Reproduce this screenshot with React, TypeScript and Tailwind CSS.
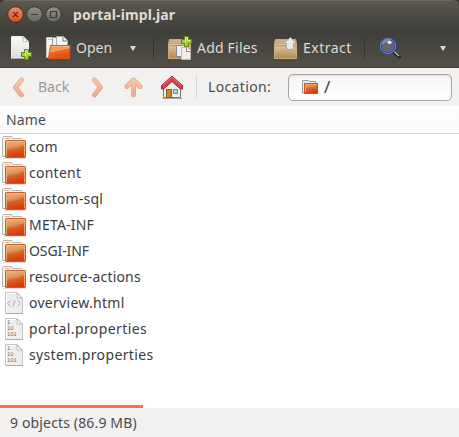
import React from "react";

function FolderIcon() {
  return (
    <svg width="24" height="24" viewBox="0 0 24 24" className="shrink-0">
      <defs>
        <linearGradient id="folderFace" x1="0" y1="0" x2="0.25" y2="1">
          <stop offset="0" stopColor="#e6ab72" />
          <stop offset="0.4" stopColor="#e08a45" />
          <stop offset="0.55" stopColor="#da6628" />
          <stop offset="1" stopColor="#d43c0d" />
        </linearGradient>
      </defs>
      <path d="M.5 21.5V2.5l1-1H9.5l1 2H19.5l1 1V21.5z" fill="#f5f4f2" stroke="#b4b3b0" />
      <path d="M2.5 3.5H8" stroke="#efb98d" />
      <path d="M3.5 5h16" stroke="#fff" />
      <rect x="3.5" y="5.5" width="20" height="17" rx=".6" fill="url(#folderFace)" stroke="#c9602f" />
      <path d="M4.5 21.5V6.5h18v15" fill="none" stroke="#f2bd8b" strokeOpacity=".75" />
      <path d="M5 15Q16 14 22 10V7H5z" fill="#fff" opacity=".13" />
      <path d="M1 23.5h23" stroke="#888" opacity=".25" />
    </svg>
  );
}

function FileIcon({ html }: { html?: boolean }) {
  return (
    <svg width="24" height="24" viewBox="0 0 24 24" className="shrink-0">
      <path d="M3.5 1.5H15L20.5 7v15.5h-17z" fill="#ededec" stroke="#c3c3c2" />
      <path d="M4.5 21.5v-19H14" fill="none" stroke="#fff" />
      <path d="M14.5 1.5c1 2 .5 4 .5 5.5 2 0 4-.2 5.5.5z" fill="#fafafa" stroke="#bcbcbb" />
      <path d="M4 22.5h17" stroke="#aaa" />
      {html ? (
        <path d="m8.5 9.5-3 3 3 3m7-6 3 3-3 3M13 9.5l-2 6" fill="none" stroke="#a9a9a8" />
      ) : (
        <g fill="#686868" fontFamily="DejaVu Sans, sans-serif" fontSize="5.2">
          <text x="5" y="6.5">1</text>
          <text x="5" y="12.5">10</text>
          <text x="5" y="18.5">101</text>
        </g>
      )}
    </svg>
  );
}

function Plus({ x, y }: { x: number; y: number }) {
  return (
    <g transform={`translate(${x} ${y})`}>
      <path d="M3.5.5h4v3h3v4h-3v3h-4v-3h-3v-4h3z" fill="#a9cb3c" stroke="#5b8410" />
      <path d="M4.5 7V1.5h2v3h3" fill="none" stroke="#d8ed86" />
    </g>
  );
}

function NewIcon() {
  return (
    <svg width="24" height="26" viewBox="0 0 24 26" className="shrink-0">
      <defs>
        <linearGradient id="paper" x2="0" y2="1">
          <stop stopColor="#fbfbfa" />
          <stop offset="1" stopColor="#dcdcda" />
        </linearGradient>
      </defs>
      <path d="M1.5 1.5h12l5 5v17h-17z" fill="url(#paper)" stroke="#efefed" />
      <path d="M12.5 1.5c1 2 .5 3.5.5 5 2 0 4-.4 5.5.5z" fill="#fff" stroke="#aaa" strokeWidth=".8" />
      <path d="M1 23.5h18" stroke="#aaa" />
      <Plus x={11} y={14} />
    </svg>
  );
}

function OpenIcon() {
  return (
    <svg width="25" height="26" viewBox="0 0 25 26" className="shrink-0">
      <defs>
        <linearGradient id="openFace" x2=".35" y2="1">
          <stop stopColor="#ed8b38" />
          <stop offset=".48" stopColor="#f3a35b" />
          <stop offset=".52" stopColor="#ef6929" />
          <stop offset="1" stopColor="#e54e13" />
        </linearGradient>
      </defs>
      <path d="M.5 22.5v-20h8l2 3h8l2 3v14z" fill="#f3f2ef" stroke="#c9c5bd" />
      <path d="M2 4.5h5" stroke="#efb583" />
      <path d="M6.5 14V2.5h6l3 3V14z" fill="#f1f1f0" stroke="#999" />
      <path d="M10.5 12.5v-11h7l4 4v8z" fill="#f4f4f3" stroke="#aaa" />
      <path d="M17 2v4h4" fill="#fff" stroke="#777" />
      <path d="M4.5 10.5h19.5l-.5 13H2.5z" fill="url(#openFace)" stroke="#df571d" />
      <path d="M5 11.5h18" stroke="#f7b47a" />
    </svg>
  );
}

function PackageIcon({ extract }: { extract?: boolean }) {
  return (
    <svg width="25" height="26" viewBox="0 0 25 26" className="shrink-0">
      <defs>
        <linearGradient id="box" x2="0" y2="1">
          <stop stopColor="#d4b58a" />
          <stop offset=".35" stopColor="#c19c68" />
          <stop offset=".38" stopColor="#dabe95" />
          <stop offset="1" stopColor="#ad8a58" />
        </linearGradient>
      </defs>
      <path d="M.5 8.5l1-4h20l1 4v15H.5z" fill="url(#box)" stroke="#c9ab7d" />
      <path d="M1 9.5h21" stroke="#e9d3af" opacity=".7" />
      {extract ? (
        <path d="M16.5 2.5l6 6h-3v6h-7v-6h-3z" fill="#e8e8e7" stroke="#aaa" />
      ) : (
        <>
          <path d="M8.5 10.5h7l2 2v9h-9z" fill="#f1f1f0" stroke="#888" />
          <path d="M13.5 12.5h6l3 3v9h-9z" fill="#ededec" stroke="#bbb" />
          <path d="M18.5 12.5v4h4" fill="#fff" stroke="#888" />
          <Plus x={13} y={1} />
        </>
      )}
    </svg>
  );
}

function SearchIcon() {
  return (
    <svg width="24" height="26" viewBox="0 0 24 26" className="shrink-0">
      <path d="m15 17 6.5 5" stroke="#252524" strokeWidth="3" strokeLinecap="round" />
      <path d="m16 16.5 5 4.5" stroke="#bbb" strokeWidth="1.2" />
      <circle cx="10" cy="11" r="7.6" fill="#65666a" stroke="#29449c" strokeWidth="2.2" />
      <circle cx="10" cy="11" r="7.6" fill="none" stroke="#839be6" strokeWidth=".7" />
      <path d="M4.5 9a6 6 0 0 1 8-3.5" stroke="#8f9094" strokeWidth="2" fill="none" />
      <ellipse cx="11.5" cy="7.5" rx="2.2" ry="1.4" fill="#f1f1f1" />
    </svg>
  );
}

function Arrow({ kind }: { kind: "left" | "right" | "up" }) {
  const paths = {
    left: "M9.5 3 3.5 10.5 9.5 18",
    right: "M3.5 3 9.5 10.5 3.5 18",
    up: "M9.5 18V3M3 9.5 9.5 3 16 9.5",
  };
  const width = kind === "up" ? 19 : 13;
  return (
    <svg width={width} height="21" viewBox={`0 0 ${width} 21`} className="shrink-0">
      <defs>
        <linearGradient id={`arrow-${kind}`} gradientUnits="userSpaceOnUse" x1="0" y1="0" x2="0" y2="20">
          <stop stopColor="#eed0ac" />
          <stop offset="1" stopColor="#f1a58e" />
        </linearGradient>
      </defs>
      <path d={paths[kind]} fill="none" stroke="#e6a087" strokeWidth="4.8" strokeLinecap="round" strokeLinejoin="round" />
      <path d={paths[kind]} fill="none" stroke={`url(#arrow-${kind})`} strokeWidth="3.5" strokeLinecap="round" strokeLinejoin="round" />
    </svg>
  );
}

function HomeIcon() {
  return (
    <svg width="24" height="24" viewBox="0 0 24 24" className="shrink-0">
      <path d="M3.5 12 12 5l8.5 7v10.5h-17z" fill="#eeeeed" stroke="#777" />
      <path d="M1.5 14v-3.5L12 1l10.5 9.5V14h-2L12 6.5 3.5 14z" fill="#cf4650" stroke="#a7202c" />
      <path d="M3 10 12 2l8.5 7.5" fill="none" stroke="#e17b80" />
      <path d="M6.5 14.5h5v8h-5z" fill="#c88b17" stroke="#896013" />
      <path d="M13.5 14.5h4v4h-4z" fill="#b8d3d6" stroke="#6d898d" />
      <path d="M2 23.5h20" stroke="#777" opacity=".6" />
    </svg>
  );
}

const files = [
  { name: "com", tracking: "tracking-[0.1px]" },
  { name: "content", tracking: "tracking-[0.25px]" },
  { name: "custom-sql", tracking: "tracking-[0.2px]" },
  { name: "META-INF", tracking: "tracking-[0.2px]" },
  { name: "OSGI-INF", tracking: "tracking-[-0.1px]" },
  { name: "resource-actions", tracking: "tracking-[0.18px]" },
  { name: "overview.html", tracking: "tracking-[0.28px]" },
  { name: "portal.properties", tracking: "tracking-[0.4px]" },
  { name: "system.properties", tracking: "tracking-[0.35px]" },
];

export default function App() {
  return (
    <div className="flex h-[437px] w-[459px] flex-col overflow-hidden bg-[#393833] font-['Noto_Sans',sans-serif] text-[14px] leading-5 text-[#3c3c3c]">
      <header className="flex h-[29px] shrink-0 items-center rounded-t-[6px] border-t border-[#6b6860] bg-linear-to-b from-[#5b5850] to-[#403f3a] pl-[7px]">
        <svg width="56" height="18" viewBox="0 0 56 18">
          <defs>
            <linearGradient id="close" x2="0" y2="1"><stop stopColor="#f58b69" /><stop offset="1" stopColor="#df4b1b" /></linearGradient>
            <linearGradient id="windowButton" x2="0" y2="1"><stop stopColor="#92908a" /><stop offset="1" stopColor="#65645e" /></linearGradient>
          </defs>
          <g stroke="#35342f">
            <circle cx="8.5" cy="8.5" r="7.8" fill="url(#close)" />
            <circle cx="27.5" cy="8.5" r="7.8" fill="url(#windowButton)" />
            <circle cx="46.5" cy="8.5" r="7.8" fill="url(#windowButton)" />
          </g>
          <path d="m6 6 5 5m0-5-5 5M24 8.5h7M43.5 5.5h6v6h-6z" stroke="#3c3b36" strokeWidth="1.2" fill="none" />
        </svg>
        <h1 className="ml-[10px] font-bold tracking-[0.1px] text-[#dfdbd2]">portal-impl.jar</h1>
      </header>
      <div className="flex h-[39px] shrink-0 items-center border-b border-[#3e3d38] bg-linear-to-b from-[#3e3d39] to-[#534f48] pl-[10px] text-[#dfdbd2]">
        <NewIcon />
        <button className="ml-[12px] flex items-center"><OpenIcon /><span className="ml-[5px] w-[54px] text-left">Open</span><span className="h-0 w-0 border-x-[3px] border-t-[5px] border-x-transparent border-t-[#dfdbd2]" /></button>
        <span className="ml-[17px] h-[20px] w-px bg-[#34332f]" />
        <button className="ml-[14px] flex w-[92px] items-center"><PackageIcon /><span className="ml-[4px] whitespace-nowrap tracking-[0.2px]">Add Files</span></button>
        <button className="ml-[14px] flex w-[78px] items-center"><PackageIcon extract /><span className="ml-[4px] tracking-[0.5px]">Extract</span></button>
        <span className="ml-[12px] h-[20px] w-px bg-[#34332f]" />
        <span className="ml-[13px]"><SearchIcon /></span>
        <span className="ml-auto mr-[13px] h-0 w-0 border-x-[3px] border-t-[5px] border-x-transparent border-t-[#dfdbd2]" />
      </div>
      <nav className="flex h-[38px] shrink-0 items-center bg-[#f2f1f0] pl-[12px]">
        <Arrow kind="left" />
        <span className="ml-[13px] w-[53px] text-[#9b9b99]">Back</span>
        <Arrow kind="right" />
        <span className="ml-[20px]"><Arrow kind="up" /></span>
        <span className="ml-[17px]"><HomeIcon /></span>
        <span className="ml-[12px] h-[22px] w-px bg-[#d8d7d5]" />
        <span className="ml-[11px] w-[80px] tracking-[0.35px] text-[#4c4c4c]">Location:</span>
        <div className="flex h-[27px] w-[164px] items-center rounded-[5px] border border-[#a6a5a1] bg-linear-to-b from-[#f4f4f4] to-white pl-[13px] shadow-[inset_0_1px_1px_#ddd]">
          <svg width="17" height="16" viewBox="0 0 17 16"><path d="M.5 14V1.5h6l1 1h6v2h-11V14z" fill="#eee" stroke="#999" /><rect x="2.5" y="4.5" width="13" height="10" fill="url(#folderFace)" stroke="#cf5325" /><path d="M3.5 13V5.5h11" fill="none" stroke="#eca76f" /></svg>
          <span className="ml-[5px] text-[17px]">/</span>
        </div>
      </nav>
      <div className="flex h-[28px] shrink-0 items-center border-b border-[#d8d8d8] bg-linear-to-b from-white to-[#f8f8f8] pl-[6px] tracking-[0.15px] text-[#4c4c4c]">Name</div>
      <main className="min-h-0 flex-1 bg-white">
        {files.map((file, i) => <div key={file.name} className="flex h-[26px] items-center pl-[2px]">{i < 6 ? <FolderIcon /> : <FileIcon html={i === 6} />}<span className={`ml-[3px] ${file.tracking}`}>{file.name}</span></div>)}
      </main>
      <div className="h-[3px] shrink-0 bg-white"><div className="h-full w-[143px] bg-[#f07746]" /></div>
      <footer className="flex h-[29px] shrink-0 items-center bg-[#f2f1f0] pl-[10px] tracking-[0.15px] text-[#4c4c4c]">9 objects (86.9 MB)</footer>
    </div>
  );
}
